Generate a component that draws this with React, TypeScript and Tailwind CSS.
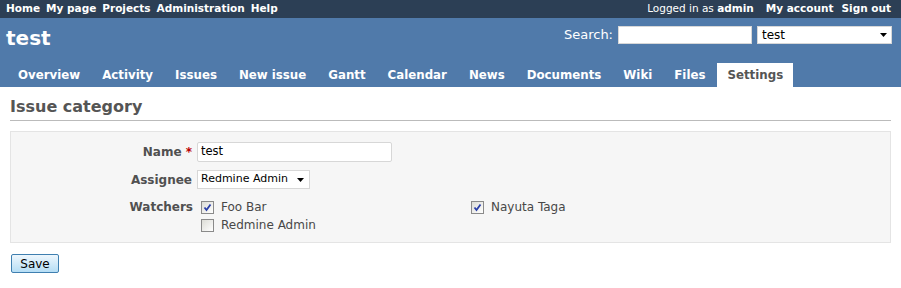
import React from "react";

const font = { fontFamily: '"DejaVu Sans", Verdana, sans-serif' };

function Check({ checked }: { checked: boolean }) {
  return (
    <span className="inline-block w-[13px] h-[13px] border border-[#8a8a8a] bg-gradient-to-br from-[#dcdcd6] to-[#ffffff] relative shrink-0">
      {checked && (
        <svg viewBox="0 0 11 11" className="absolute left-0 top-0 w-[11px] h-[11px]">
          <path d="M2.5 5.5 L4.5 8 L8.5 2.5" fill="none" stroke="#2a3fa8" strokeWidth="1.8" />
        </svg>
      )}
    </span>
  );
}

function Arrow() {
  return (
    <svg viewBox="0 0 7 4" className="w-[7px] h-[4px]">
      <path d="M0 0 H7 L3.5 4 Z" fill="#000" />
    </svg>
  );
}

export default function App() {
  const tabs = ["Overview", "Activity", "Issues", "New issue", "Gantt", "Calendar", "News", "Documents", "Wiki", "Files"];
  return (
    <div className="w-[901px] h-[288px] bg-white text-[#484848] overflow-hidden" style={font}>
      {/* top menu */}
      <div className="h-[18px] bg-[#2c3f55] text-white text-[10.5px] font-bold flex items-center justify-between px-[6px]">
        <div className="flex gap-[6px]">
          <span>Home</span>
          <span>My page</span>
          <span>Projects</span>
          <span>Administration</span>
          <span>Help</span>
        </div>
        <div className="flex gap-[12px] pr-[4px]">
          <span className="font-normal">
            Logged in as <span className="font-bold">admin</span>
          </span>
          <span className="flex gap-[8px]">
            <span>My account</span>
            <span>Sign out</span>
          </span>
        </div>
      </div>
      {/* header */}
      <div className="bg-[#507aaa] h-[69px] flex flex-col">
        <div className="flex justify-between items-start h-[45px]">
          <div className="text-white font-bold text-[20px] leading-none pl-[6px] pt-[10px]">test</div>
          <div className="flex items-center pt-[7px] pr-[9px] text-white text-[13px]">
            <span className="mr-[5px]">Search:</span>
            <div className="w-[134px] h-[18px] bg-white border border-[#d7d7d7]" />
            <div className="w-[135px] h-[18px] bg-white border border-[#d7d7d7] ml-[5px] flex items-center justify-between pl-[4px] pr-[4px] text-black text-[12px]">
              <span>test</span>
              <Arrow />
            </div>
          </div>
        </div>
        <div className="flex items-end pl-[8px] mt-auto">
          {tabs.map((t) => (
            <span key={t} className="text-white font-bold text-[11.8px] px-[10px] mr-[2px] h-[24px] pt-[2px] flex items-center">
              {t}
            </span>
          ))}
          <span className="bg-white text-[#555] font-bold text-[11.8px] px-[10px] h-[24px] pt-[2px] flex items-center">Settings</span>
        </div>
      </div>
      {/* content */}
      <div className="px-[10px] pt-[8px]">
        <h2 className="text-[#555] font-bold text-[16px] leading-[24px] border-b border-[#bbbbbb] pb-[1px]">Issue category</h2>
        <div className="mt-[10px] bg-[#f6f6f6] border border-[#e4e4e4] h-[112px] pt-[10px] text-[12px]">
          <div className="flex items-center h-[20px]">
            <div className="w-[186px] text-right font-bold text-[#505050] pr-[5px]">
              Name <span className="text-[#bb0000]">*</span>
            </div>
            <div className="w-[195px] h-[20px] bg-white border border-[#d7d7d7] rounded-[2px] flex items-center pl-[3px] text-black text-[11.5px]">test</div>
          </div>
          <div className="flex items-center h-[19px] mt-[8px]">
            <div className="w-[186px] text-right font-bold text-[#505050] pr-[5px]">Assignee</div>
            <div className="w-[113px] h-[19px] bg-white border border-[#d7d7d7] flex items-center justify-between pl-[3px] pr-[5px] text-black text-[11px]">
              <span>Redmine Admin</span>
              <Arrow />
            </div>
          </div>
          <div className="flex mt-[9px]">
            <div className="w-[186px] text-right font-bold text-[#505050] pr-[4px] leading-[18px]">Watchers</div>
            <div className="flex flex-wrap w-[560px] pl-[4px]">
              <label className="w-[270px] flex items-center gap-[7px] h-[18px]">
                <Check checked />
                <span>Foo Bar</span>
              </label>
              <label className="w-[270px] flex items-center gap-[7px] h-[18px]">
                <Check checked />
                <span>Nayuta Taga</span>
              </label>
              <label className="w-[270px] flex items-center gap-[7px] h-[18px]">
                <Check checked={false} />
                <span>Redmine Admin</span>
              </label>
            </div>
          </div>
        </div>
        <button className="mt-[11px] ml-[1px] w-[48px] h-[19px] border border-[#3f7fb0] rounded-[2px] bg-gradient-to-b from-[#eef7fd] to-[#b5ddf5] text-black text-[12px] leading-none flex items-center justify-center">
          Save
        </button>
      </div>
    </div>
  );
}
